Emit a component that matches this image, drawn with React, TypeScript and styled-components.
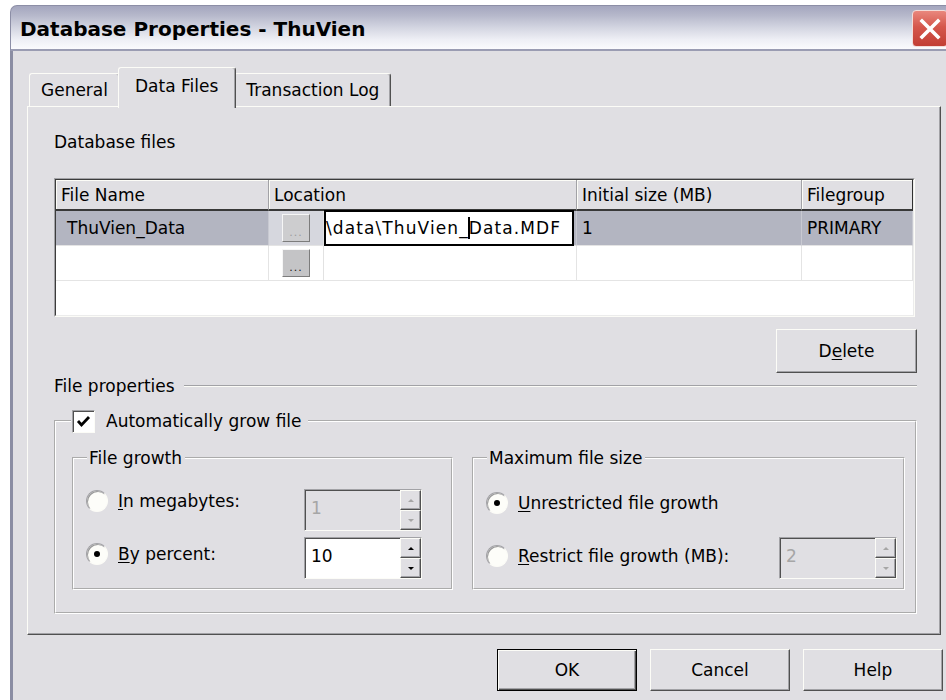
import React from 'react';
import styled, { createGlobalStyle } from 'styled-components';

// classic 3D palette
const FACE = '#e0dfe3';
const HILITE = '#fcfcf7';
const SHADOW = '#a2a2a6';
const DARK = '#505050';

const GlobalStyle = createGlobalStyle`
	html, body {
		margin: 0;
		padding: 0;
		background: #ffffff;
		overflow: hidden;
	}
	body {
		font-family: 'DejaVu Sans', 'Liberation Sans', sans-serif;
		font-size: 17px;
		line-height: 20px;
		color: #000000;
	}
	u {
		text-underline-offset: 2px;
	}
`;

const Window = styled.div`
	width: 944px;
	margin: 5px 0 0 10px;
	display: flex;
	flex-direction: column;
`;

const TitleBar = styled.div`
	box-sizing: border-box;
	height: 46px;
	display: flex;
	align-items: center;
	justify-content: space-between;
	padding-left: 9px;
	border: 1px solid #8c8ea6;
	border-bottom: 2px solid #9a9cb2;
	border-radius: 7px 7px 0 0;
	background: linear-gradient(#a4a6be 0%, #b6b8cb 22%, #d3d5e1 50%, #eeeff5 78%, #fbfbfd 100%);
`;

const TitleText = styled.div`
	font-size: 20px;
	font-weight: bold;
	padding-top: 2px;
`;

const CloseButton = styled.div`
	box-sizing: border-box;
	width: 36px;
	height: 37px;
	margin: 0 5px 0 0;
	align-self: flex-start;
	margin-top: 4px;
	border: 1px solid #f3dcd9;
	border-radius: 4px;
	background: linear-gradient(#e9877d, #d5574c 45%, #c23e34);
	display: flex;
	align-items: center;
	justify-content: center;
`;

const DialogBody = styled.div`
	background: ${FACE};
	border-left: 3px solid #8b8da3;
	border-right: 3px solid #8b8da3;
	padding: 16px 10px 20px 14px;
	display: flex;
	flex-direction: column;
`;

const TabStrip = styled.div`
	display: flex;
	align-items: flex-end;
	padding-left: 2px;
	margin-bottom: -2px;
	position: relative;
	z-index: 1;
`;

const Tab = styled.div<{ $active?: boolean }>`
	box-sizing: border-box;
	height: ${({ $active }) => ($active ? '41px' : '33px')};
	margin: ${({ $active }) => ($active ? '0 -2px' : '0 0 2px')};
	padding: ${({ $active }) => ($active ? '0 17px 4px 16px' : '0 11px')};
	display: flex;
	align-items: center;
	background: ${FACE};
	border: 1px solid ${HILITE};
	border-right-color: ${DARK};
	border-bottom: none;
	border-radius: 3px 3px 0 0;
	box-shadow: inset -1px 0 0 ${SHADOW};
	position: relative;
	z-index: ${({ $active }) => ($active ? 2 : 1)};
`;

const TabPanel = styled.div`
	border: 1px solid;
	border-color: ${HILITE} ${DARK} ${DARK} ${HILITE};
	box-shadow: inset -1px -1px 0 ${SHADOW};
	padding: 25px 23px 20px 26px;
	display: flex;
	flex-direction: column;
`;

const SectionLabel = styled.div`
	height: 20px;
`;

const GridFrame = styled.div`
	margin: 26px 2px 0 0;
	border: 1px solid;
	border-color: ${SHADOW} ${HILITE} ${HILITE} ${SHADOW};
`;

const GridInner = styled.div`
	display: grid;
	grid-template-columns: 213px 308px 225px 111px;
	background: #ffffff;
	border: 1px solid;
	border-color: #3c3c3c #ececec #ececec #3c3c3c;
`;

const HeaderCell = styled.div<{ $last?: boolean }>`
	box-sizing: border-box;
	height: 31px;
	padding-left: 5px;
	display: flex;
	align-items: center;
	background: ${FACE};
	box-shadow: inset 1px 1px 0 ${HILITE};
	border-right: 1px solid ${({ $last }) => ($last ? '#303030' : SHADOW)};
	border-bottom: 2px solid #383838;
`;

const Cell = styled.div<{ $selected?: boolean; $indent?: boolean }>`
	box-sizing: border-box;
	height: 35px;
	padding-left: ${({ $indent }) => ($indent ? '11px' : '5px')};
	display: flex;
	align-items: center;
	white-space: nowrap;
	background: ${({ $selected }) => ($selected ? '#b3b5c1' : '#ffffff')};
	border-right: 1px solid ${({ $selected }) => ($selected ? '#c8c9d1' : '#e4e4e4')};
	border-bottom: 1px solid #e4e4e4;
`;

const LocationCell = styled(Cell)`
	padding-left: 0;
	align-items: stretch;
`;

const BrowseSlot = styled.div<{ $selected?: boolean }>`
	width: 54px;
	flex: none;
	display: flex;
	align-items: center;
	justify-content: center;
	background: ${({ $selected }) => ($selected ? '#d6d7de' : '#ffffff')};
	border-right: 1px solid #e2e2e2;
`;

const BrowseButton = styled.span<{ $disabled?: boolean }>`
	box-sizing: border-box;
	width: 28px;
	height: 28px;
	display: flex;
	align-items: flex-end;
	justify-content: center;
	padding-bottom: 4px;
	background: ${({ $disabled }) => ($disabled ? '#cdcdcf' : '#c4c4c6')};
	border: 1px solid;
	border-color: #f6f6f6 #7c7c7c #7c7c7c #f6f6f6;
	font-size: 11px;
	line-height: 8px;
	letter-spacing: 1px;
	color: ${({ $disabled }) => ($disabled ? '#9c9ca0' : '#202020')};
`;

const EditField = styled.div`
	flex: 1;
	margin: -1px 2px -1px 0;
	border: 2px solid #000000;
	background: #ffffff;
	display: flex;
	align-items: center;
	overflow: hidden;
	white-space: nowrap;
	letter-spacing: 1.1px;
`;

const Caret = styled.span`
	display: inline-block;
	width: 0;
	height: 22px;
	margin: 0 -1px;
	border-left: 2px solid #000000;
	vertical-align: -5px;
`;

const FillerRow = styled.div`
	grid-column: 1 / -1;
	height: 34px;
`;

const PushButton = styled.div<{ $default?: boolean; $tall?: boolean }>`
	box-sizing: border-box;
	width: ${({ $tall }) => ($tall ? 141 : 140)}px;
	height: ${({ $tall }) => ($tall ? 44 : 42)}px;
	display: flex;
	align-items: center;
	justify-content: center;
	background: ${FACE};
	border: 1px solid;
	border-color: ${({ $default }) => ($default ? '#000000' : `${HILITE} ${DARK} ${DARK} ${HILITE}`)};
	box-shadow: ${({ $default }) =>
		$default
			? `inset 1px 1px 0 ${HILITE}, inset -1px -1px 0 ${DARK}, inset -2px -2px 0 ${SHADOW}`
			: `inset -1px -1px 0 ${SHADOW}`};
`;

const DeleteRow = styled.div`
	display: flex;
	justify-content: flex-end;
	margin-top: 12px;
`;

const SectionRow = styled.div`
	display: flex;
	align-items: center;
	gap: 9px;
	height: 20px;
	margin-top: 3px;
`;

const EtchedLine = styled.div`
	flex: 1;
	border-top: 1px solid ${SHADOW};
	border-bottom: 1px solid ${HILITE};
`;

const GroupBox = styled.fieldset<{ $top?: number }>`
	margin: ${({ $top }) => $top ?? 0}px 0 0;
	padding: 0;
	min-width: 0;
	border: 2px groove #ffffff;
`;

const GroupLegend = styled.legend`
	margin-left: 13px;
	padding: 0 3px 0 2px;
	line-height: 20px;
`;

const CheckLegend = styled(GroupLegend)`
	margin-left: 15px;
	padding: 0 6px 0 1px;
`;

const LegendInner = styled.span`
	display: inline-flex;
	align-items: center;
	gap: 11px;
	height: 24px;
`;

const CheckBox = styled.span`
	box-sizing: border-box;
	width: 23px;
	height: 23px;
	display: flex;
	align-items: center;
	justify-content: center;
	background: #ffffff;
	border: 1px solid;
	border-color: ${SHADOW} ${HILITE} ${HILITE} ${SHADOW};
	box-shadow: inset 1px 1px 0 ${DARK};
`;

const AutoGrowContent = styled.div`
	display: grid;
	grid-template-columns: 381px 1fr;
	gap: 19px;
	padding: 15px 10px 22px 16px;
`;

const GroupContent = styled.div<{ $padRight: number }>`
	display: flex;
	flex-direction: column;
	gap: 6px;
	padding: 21px ${({ $padRight }) => $padRight}px 9px 12px;
`;

const OptionRow = styled.div`
	display: flex;
	justify-content: space-between;
	align-items: flex-start;
	height: 42px;
`;

const RadioItem = styled.label<{ $top: number }>`
	display: flex;
	align-items: center;
	gap: 10px;
	height: 22px;
	margin-top: ${({ $top }) => $top}px;
`;

const RadioCircle = styled.span<{ $checked?: boolean }>`
	box-sizing: border-box;
	width: 22px;
	height: 22px;
	border-radius: 50%;
	display: flex;
	align-items: center;
	justify-content: center;
	background: #fdfdf9;
	border: 1px solid;
	border-color: ${SHADOW} ${HILITE} ${HILITE} ${SHADOW};
	box-shadow: inset 1px 1px 0 #9a9a9a;

	&::after {
		content: '';
		width: 6px;
		height: 6px;
		border-radius: 50%;
		background: #000000;
		display: ${({ $checked }) => ($checked ? 'block' : 'none')};
	}
`;

const SpinBox = styled.div`
	box-sizing: border-box;
	width: 118px;
	height: 42px;
	display: flex;
	border: 1px solid;
	border-color: ${SHADOW} ${HILITE} ${HILITE} ${SHADOW};
`;

const SpinField = styled.div<{ $disabled?: boolean }>`
	flex: 1;
	display: flex;
	align-items: center;
	padding: 0 0 4px 6px;
	background: ${({ $disabled }) => ($disabled ? FACE : '#ffffff')};
	color: ${({ $disabled }) => ($disabled ? '#a6a6a6' : '#000000')};
	box-shadow: inset 1px 1px 0 ${DARK};
`;

const SpinButtons = styled.div`
	width: 21px;
	display: flex;
	flex-direction: column;
`;

const SpinArrow = styled.div<{ $down?: boolean; $disabled?: boolean }>`
	flex: 1;
	display: flex;
	align-items: center;
	justify-content: center;
	background: ${FACE};
	border: 1px solid;
	border-color: ${HILITE} ${DARK} ${DARK} ${HILITE};
	box-shadow: inset -1px -1px 0 ${SHADOW};

	&::after {
		content: '';
		border-left: 3px solid transparent;
		border-right: 3px solid transparent;
		${({ $down, $disabled }) =>
			$down
				? `border-top: 3px solid ${$disabled ? '#a6a6a6' : '#000'};`
				: `border-bottom: 3px solid ${$disabled ? '#a6a6a6' : '#000'};`}
	}
`;

const ButtonBar = styled.div`
	display: flex;
	justify-content: flex-end;
	gap: 13px;
	margin: 14px -2px 0 0;
`;

const Spinner: React.FC<{ value: string; disabled?: boolean }> = ({ value, disabled }) => (
	<SpinBox>
		<SpinField $disabled={disabled}>{value}</SpinField>
		<SpinButtons>
			<SpinArrow $disabled={disabled} />
			<SpinArrow $down $disabled={disabled} />
		</SpinButtons>
	</SpinBox>
);

const Radio: React.FC<{ checked?: boolean; top: number; children: React.ReactNode }> = ({ checked, top, children }) => (
	<RadioItem $top={top}>
		<RadioCircle $checked={checked} />
		<span>{children}</span>
	</RadioItem>
);

const App: React.FC = () => {
	return (
		<>
			<GlobalStyle />
			<Window>
				<TitleBar>
					<TitleText>Database Properties - ThuVien</TitleText>
					<CloseButton>
						<svg width="22" height="22" viewBox="0 0 22 22">
							<path d="M3 3 L19 19 M19 3 L3 19" stroke="#ffffff" strokeWidth="3.6" strokeLinecap="square" />
						</svg>
					</CloseButton>
				</TitleBar>
				<DialogBody>
					<TabStrip>
						<Tab>General</Tab>
						<Tab $active>Data Files</Tab>
						<Tab>Transaction Log</Tab>
					</TabStrip>
					<TabPanel>
						<SectionLabel>Database files</SectionLabel>
						<GridFrame>
							<GridInner>
								<HeaderCell>File Name</HeaderCell>
								<HeaderCell>Location</HeaderCell>
								<HeaderCell>Initial size (MB)</HeaderCell>
								<HeaderCell $last>Filegroup</HeaderCell>

								<Cell $selected $indent>ThuVien_Data</Cell>
								<LocationCell $selected>
									<BrowseSlot $selected>
										<BrowseButton $disabled>...</BrowseButton>
									</BrowseSlot>
									<EditField>
										<span>
											\data\ThuVien_<Caret />Data.MDF
										</span>
									</EditField>
								</LocationCell>
								<Cell $selected>1</Cell>
								<Cell $selected>PRIMARY</Cell>

								<Cell />
								<LocationCell>
									<BrowseSlot>
										<BrowseButton>...</BrowseButton>
									</BrowseSlot>
								</LocationCell>
								<Cell />
								<Cell />

								<FillerRow />
							</GridInner>
						</GridFrame>
						<DeleteRow>
							<PushButton $tall>
								<span>
									D<u>e</u>lete
								</span>
							</PushButton>
						</DeleteRow>
						<SectionRow>
							<span>File properties</span>
							<EtchedLine />
						</SectionRow>
						<GroupBox $top={13}>
							<CheckLegend>
								<LegendInner>
									<CheckBox>
										<svg width="15" height="15" viewBox="0 0 15 15">
											<path d="M2 7 L5.5 11 L13 3" stroke="#000" strokeWidth="2.8" fill="none" />
										</svg>
									</CheckBox>
									<span>Automatically grow file</span>
								</LegendInner>
							</CheckLegend>
							<AutoGrowContent>
								<GroupBox>
									<GroupLegend>File growth</GroupLegend>
									<GroupContent $padRight={29}>
										<OptionRow>
											<Radio top={1}>
												<u>I</u>n megabytes:
											</Radio>
											<Spinner value="1" disabled />
										</OptionRow>
										<OptionRow>
											<Radio checked top={6}>
												<u>B</u>y percent:
											</Radio>
											<Spinner value="10" />
										</OptionRow>
									</GroupContent>
								</GroupBox>
								<GroupBox>
									<GroupLegend>Maximum file size</GroupLegend>
									<GroupContent $padRight={6}>
										<OptionRow>
											<Radio checked top={3}>
												<u>U</u>nrestricted file growth
											</Radio>
										</OptionRow>
										<OptionRow>
											<Radio top={8}>
												<u>R</u>estrict file growth (MB):
											</Radio>
											<Spinner value="2" disabled />
										</OptionRow>
									</GroupContent>
								</GroupBox>
							</AutoGrowContent>
						</GroupBox>
					</TabPanel>
					<ButtonBar>
						<PushButton $default>OK</PushButton>
						<PushButton>Cancel</PushButton>
						<PushButton>Help</PushButton>
					</ButtonBar>
				</DialogBody>
			</Window>
		</>
	);
};

export default App;
